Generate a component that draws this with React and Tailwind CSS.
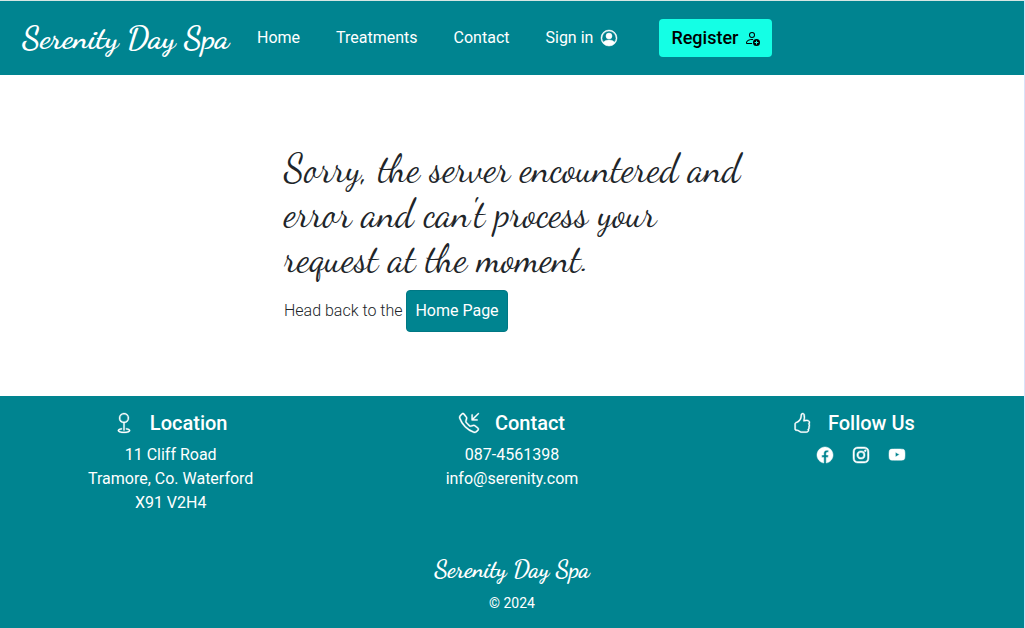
import React from "react";
import {
  BsPersonCircle,
  BsPersonAdd,
  BsGeo,
  BsTelephoneInbound,
  BsHandThumbsUp,
  BsFacebook,
  BsInstagram,
  BsYoutube,
} from "react-icons/bs";

const navLinks = ["Home", "Treatments", "Contact"];

const socials = [
  { label: "Facebook", Icon: BsFacebook },
  { label: "Instagram", Icon: BsInstagram },
  { label: "YouTube", Icon: BsYoutube },
];

const script = "font-['Dancing_Script',cursive]";

function Navbar() {
  return (
    <nav className="flex h-[75px] items-center border-t border-[#d5e6e3] bg-[#008490] pl-[22px] text-white">
      <a href="#home" className={`${script} w-[209px] shrink-0 whitespace-nowrap text-[32px] leading-10 font-bold`}>
        Serenity Day Spa
      </a>
      <ul className="ml-[26px] flex items-center gap-9">
        {navLinks.map((link) => (
          <li key={link}>
            <a href={`#${link.toLowerCase()}`}>{link}</a>
          </li>
        ))}
        <li>
          <a href="#signin" className="flex items-center gap-2">
            Sign in <BsPersonCircle className="size-4 overflow-visible stroke-current [stroke-width:0.5]" aria-hidden="true" />
          </a>
        </li>
      </ul>
      <a
        href="#register"
        className="ml-[42px] flex h-[38px] items-center gap-1.5 rounded bg-[#14ffe5] px-3 text-lg font-medium text-black"
      >
        Register <BsPersonAdd className="size-4" aria-hidden="true" />
      </a>
    </nav>
  );
}

function FooterColumn({ Icon, title, children }) {
  return (
    <section className="text-center">
      <h2 className="mb-2 flex items-center justify-center gap-4 text-xl leading-6 font-medium">
        <Icon className="overflow-visible stroke-current [stroke-width:0.25]" aria-hidden="true" />
        {title}
      </h2>
      {children}
    </section>
  );
}

export default function App() {
  return (
    <div className="flex min-h-screen flex-col border-r border-[#d9e2fa] bg-white font-[Roboto,sans-serif] text-base text-[#212529]">
      <Navbar />
      <main className="mx-auto w-full max-w-[456px] grow pt-[72px] pb-16">
        <h1 className={`${script} mb-2 text-[38px] leading-[45px] whitespace-nowrap`}>
          <span className="block">Sorry, the server encountered and</span>
          <span className="block">error and can't process your</span>
          <span className="block">request at the moment.</span>
        </h1>
        <p className="font-light">
          Head back to the{" "}
          <a
            href="#home"
            className="inline-block rounded border border-[#007884] bg-[#008490] px-2 py-2 font-normal text-white"
          >
            Home Page
          </a>
        </p>
      </main>
      <footer className="bg-[#008490] pt-[15px] pb-[15px] text-white">
        <div className="grid grid-cols-3">
          <FooterColumn Icon={BsGeo} title="Location">
            <address className="not-italic">
              11 Cliff Road
              <br />
              Tramore, Co. Waterford
              <br />
              X91 V2H4
            </address>
          </FooterColumn>
          <FooterColumn Icon={BsTelephoneInbound} title="Contact">
            <p>087-4561398</p>
            <p>info@serenity.com</p>
          </FooterColumn>
          <FooterColumn Icon={BsHandThumbsUp} title="Follow Us">
            <div className="flex h-6 items-center justify-center gap-5 pl-4">
              {socials.map(({ label, Icon }) => (
                <a key={label} href={`#${label.toLowerCase()}`} aria-label={label}>
                  <Icon className="overflow-visible stroke-current [stroke-width:0.5]" />
                </a>
              ))}
            </div>
          </FooterColumn>
        </div>
        <div className="pt-[39px] text-center">
          <p className={`${script} text-2xl leading-8 font-bold`}>Serenity Day Spa</p>
          <p className="mt-[7px] text-sm">© 2024</p>
        </div>
      </footer>
    </div>
  );
}
